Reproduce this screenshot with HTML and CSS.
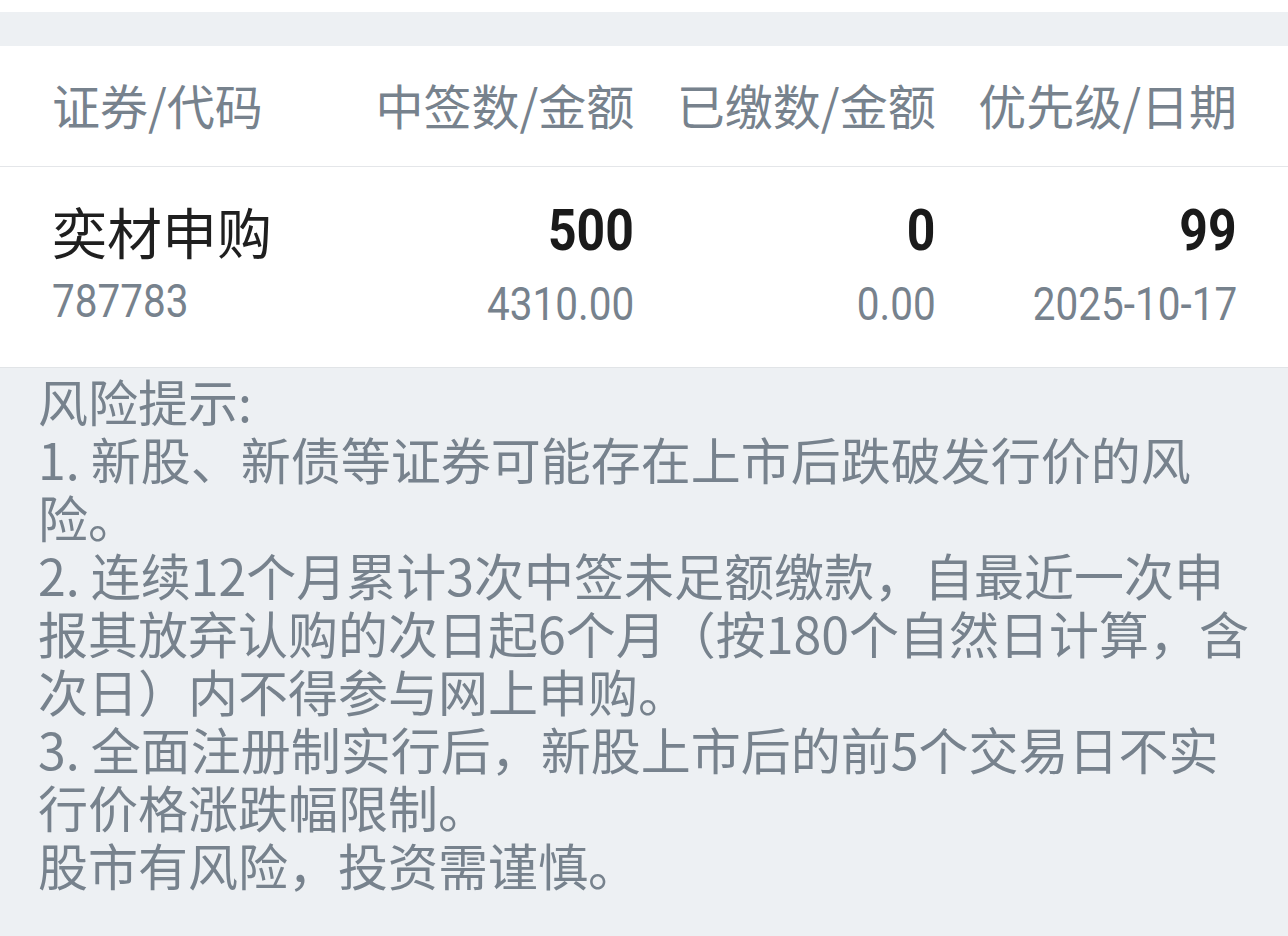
FILE: index.html
```html
<!DOCTYPE html>
<html lang="zh-CN">
<head>
  <meta charset="UTF-8">
  <meta name="viewport" content="width=device-width, initial-scale=1.0">
  <title>新股中签</title>
  <link rel="stylesheet" href="styles.css">
</head>
<body>

<div class="top-space"></div>
<div class="band"></div>

<!-- 表头 -->
<div class="grid thead">
  <div class="cell left">证券/代码</div>
  <div class="cell">中签数/金额</div>
  <div class="cell">已缴数/金额</div>
  <div class="cell">优先级/日期</div>
</div>

<!-- 中签记录 -->
<div class="grid row">
  <div class="cell left">
    <div class="name">奕材申购</div>
    <div class="sub"><span class="num">787783</span></div>
  </div>
  <div class="cell">
    <div class="main"><span class="num">500</span></div>
    <div class="sub"><span class="num">4310.00</span></div>
  </div>
  <div class="cell">
    <div class="main"><span class="num">0</span></div>
    <div class="sub"><span class="num">0.00</span></div>
  </div>
  <div class="cell">
    <div class="main"><span class="num">99</span></div>
    <div class="sub"><span class="num">2025-10-17</span></div>
  </div>
</div>

<!-- 风险提示 -->
<div class="notice">
  <p>风险提示:</p>
  <p>1. 新股、新债等证券可能存在上市后跌破发行价的风险。</p>
  <p>2. 连续12个月累计3次中签未足额缴款，自最近一次申报其放弃认购的次日起6个月（按180个自然日计算，含次日）内不得参与网上申购。</p>
  <p>3. 全面注册制实行后，新股上市后的前5个交易日不实行价格涨跌幅限制。</p>
  <p>股市有风险，投资需谨慎。</p>
</div>

</body>
</html>
```

FILE: styles.css
```css
body {
  margin: 0;
  font-family: "Noto Sans CJK SC", "Noto Sans", sans-serif;
  background-color: #edf0f3;
  color: #77828d;
}
.top-space {
  height: 12px;
  background-color: #fff;
}
.band {
  height: 34px;
}
.grid {
  display: grid;
  grid-template-columns: 281px repeat(3, 1fr);
  padding: 0 51px 0 52px;
  background-color: #fff;
}
.cell {
  text-align: right;
}
.cell.left {
  text-align: left;
}
.thead {
  height: 120px;
  line-height: 116px;
  font-size: 48px;
  border-bottom: 1px solid #e4e6e9;
}
.row {
  height: 201px;
  box-sizing: border-box;
  padding-top: 28px;
  border-bottom: 1px solid #e1e4e7;
}
/* condensed digits, DIN-like */
.num {
  display: inline-block;
  font-family: Roboto, "Liberation Sans", sans-serif;
  transform: scaleX(0.86);
  transform-origin: right center;
}
.left .num {
  transform-origin: left center;
}
.name {
  font-size: 55px;
  line-height: 70px;
  color: #1f1f1f;
}
.main {
  font-size: 58px;
  line-height: 60px;
  margin-bottom: 10px;
  font-weight: bold;
  color: #1a1a1a;
}
.sub {
  margin-top: 2px;
  font-size: 46px;
  line-height: 60px;
  color: #77828d;
}
.sub .num {
  transform: scaleX(0.88);
}
.notice {
  padding: 3px 30px 0 38px;
  font-size: 50px;
  line-height: 58px;
  color: #77828d;
}
.notice p {
  margin: 0;
}
```
